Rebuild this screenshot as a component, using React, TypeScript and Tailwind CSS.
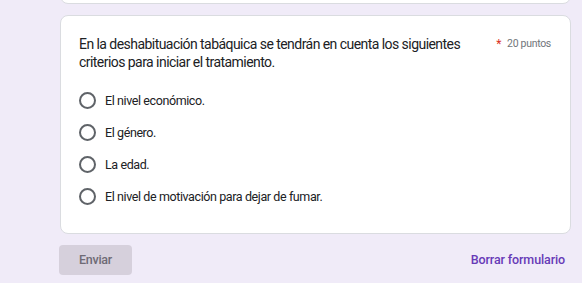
import React from "react";

const options = [
  "El nivel económico.",
  "El género.",
  "La edad.",
  "El nivel de motivación para dejar de fumar.",
];

export default function App() {
  return (
    <div
      className="w-[582px] h-[283px] overflow-hidden bg-[#f0ebf8]"
      style={{ fontFamily: "Roboto, 'Liberation Sans', Arial, sans-serif" }}
    >
      <div className="ml-[60px] w-[511px] flex flex-col">
        <div className="mt-[-20px] h-[24px] bg-white rounded-lg border border-[#dadce0]" />
        <div className="mt-[11px] bg-white rounded-lg border border-[#dadce0] pl-[18px] pr-[19px] pt-[19px] pb-[21px]">
          <div className="flex items-start">
            <div className="flex-1 text-[14px] leading-[18px] tracking-[-0.55px] text-[#202124] pr-4">
              En la deshabituación tabáquica se tendrán en cuenta los siguientes criterios para iniciar el tratamiento.
            </div>
            <div className="flex items-center gap-[6px] pt-[1px] text-[10.5px] leading-[16px] tracking-[-0.3px] text-[#70757a] whitespace-nowrap">
              <span className="text-[#d93025] text-[12px]">*</span>
              <span>20 puntos</span>
            </div>
          </div>
          <div className="mt-[13px] flex flex-col">
            {options.map((o) => (
              <div key={o} className="flex items-center h-[32px]">
                <div className="w-[17px] h-[17px] rounded-full border-2 border-[#5f6368]" />
                <span className="ml-[9px] text-[12.5px] leading-[17px] tracking-[-0.4px] text-[#202124]">{o}</span>
              </div>
            ))}
          </div>
        </div>
        <div className="mt-[11px] ml-[-1px] flex items-center justify-between">
          <div className="w-[73px] h-[30px] rounded-[4px] bg-[#d6d0dc] flex items-center justify-center text-[12.5px] tracking-[-0.3px] font-medium text-[#6f6b75]">
            Enviar
          </div>
          <div className="mr-[6px] text-[12.5px] tracking-[-0.12px] font-medium text-[#673ab7]">Borrar formulario</div>
        </div>
      </div>
    </div>
  );
}
